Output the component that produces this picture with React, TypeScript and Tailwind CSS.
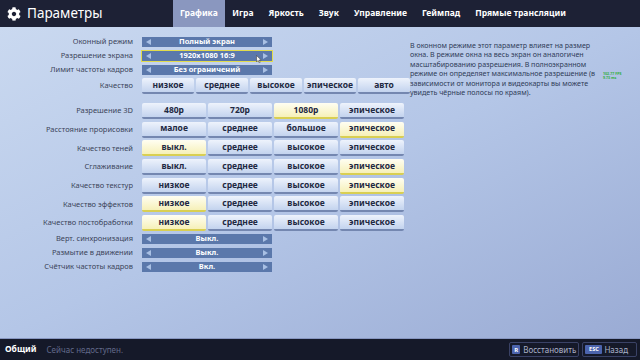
import { FaCog } from 'react-icons/fa';

const tabs = ['Графика', 'Игра', 'Яркость', 'Звук', 'Управление', 'Геймпад', 'Прямые трансляции'];

interface Row {
  label: string;
  options: string[];
  selected: number;
}

const gridRows: Row[] = [
  { label: 'Разрешение 3D', options: ['480p', '720p', '1080p', 'эпическое'], selected: 2 },
  { label: 'Расстояние прорисовки', options: ['малое', 'среднее', 'большое', 'эпическое'], selected: 3 },
  { label: 'Качество теней', options: ['выкл.', 'среднее', 'высокое', 'эпическое'], selected: 0 },
  { label: 'Сглаживание', options: ['выкл.', 'среднее', 'высокое', 'эпическое'], selected: 3 },
  { label: 'Качество текстур', options: ['низкое', 'среднее', 'высокое', 'эпическое'], selected: 3 },
  { label: 'Качество эффектов', options: ['низкое', 'среднее', 'высокое', 'эпическое'], selected: 0 },
  { label: 'Качество постобработки', options: ['низкое', 'среднее', 'высокое', 'эпическое'], selected: 0 },
];

function Label({ text }: { text: string }) {
  return (
    <div className="w-[134px] shrink-0 text-right text-[7.5px] leading-none text-[#3b4459] pr-[1px]">{text}</div>
  );
}

function Selector({ value, focused }: { value: string; focused?: boolean }) {
  return (
    <div
      className={`relative ml-[8px] flex h-[10px] w-[130px] items-center justify-between bg-[#5b78ab] px-[4px] ${
        focused ? 'outline outline-[1.5px] outline-[#e2dc4c]' : ''
      }`}
    >
      <span className="h-0 w-0 border-y-[3.5px] border-r-[5px] border-y-transparent border-r-[#a9c0e4]" />
      <span className="text-[7.5px] font-bold leading-none text-white">{value}</span>
      <span className="h-0 w-0 border-y-[3.5px] border-l-[5px] border-y-transparent border-l-[#a9c0e4]" />
      {focused && (
        <svg className="absolute left-[114px] top-[4px]" width="6" height="8" viewBox="0 0 6 8">
          <path d="M0.5 0.5 L0.5 7 L2 5.5 L3.2 7.8 L4.2 7.3 L3.1 5.1 L5.2 5 Z" fill="#f4f4f4" stroke="#333" strokeWidth="0.5" />
        </svg>
      )}
    </div>
  );
}

function Option({ text, selected, wide }: { text: string; selected?: boolean; wide?: boolean }) {
  return (
    <div
      className={`flex h-[16px] items-center justify-center rounded-[2px] border-b-[2px] text-[8.5px] font-bold leading-none text-[#1e2942] ${
        wide ? 'w-[64px]' : 'w-[52px]'
      } ${
        selected
          ? 'border-[#d9cf52] bg-linear-to-b from-[#fffef2] to-[#f6f0b8]'
          : 'border-[#7487b0] bg-linear-to-b from-[#eef3fc] to-[#c3d3ee]'
      }`}
    >
      {text}
    </div>
  );
}

export default function App() {
  return (
    <div className="flex h-[360px] w-[640px] flex-col overflow-hidden" style={{ fontFamily: '"Noto Sans", "Open Sans", sans-serif' }}>
      {/* header */}
      <div className="flex h-[27px] shrink-0 items-stretch bg-[#1d2135]">
        <div className="flex w-[173px] items-center gap-[6px] pl-[7px]">
          <FaCog className="h-[14px] w-[14px] text-white" />
          <span className="text-[13.5px] leading-none text-white">Параметры</span>
        </div>
        <div className="flex items-stretch">
          {tabs.map((t, i) => (
            <div
              key={t}
              className={`flex items-center text-[8.5px] font-bold text-white ${
                i === 0 ? 'bg-[#8a97bf] px-[7px]' : 'px-[7.5px]'
              }`}
            >
              {t}
            </div>
          ))}
        </div>
      </div>

      {/* body */}
      <div className="flex flex-1 bg-linear-to-br from-[#cad9f0] via-[#b4c6e7] to-[#9aabd4]">
        <div className="flex w-[410px] shrink-0 flex-col pt-[10px]">
          <div className="flex flex-col gap-[4px]">
            <div className="flex items-center"><Label text="Оконный режим" /><Selector value="Полный экран" /></div>
            <div className="flex items-center"><Label text="Разрешение экрана" /><Selector value="1920x1080 16:9" focused /></div>
            <div className="flex items-center"><Label text="Лимит частоты кадров" /><Selector value="Без ограничений" /></div>
          </div>

          <div className="mt-[3px] flex items-center">
            <Label text="Качество" />
            <div className="ml-[8px] flex gap-[2px]">
              {['низкое', 'среднее', 'высокое', 'эпическое', 'авто'].map((o) => (
                <Option key={o} text={o} />
              ))}
            </div>
          </div>

          <div className="mt-[9px] flex flex-col gap-[2.7px]">
            {gridRows.map((r) => (
              <div key={r.label} className="flex items-center">
                <Label text={r.label} />
                <div className="ml-[8px] flex gap-[2px]">
                  {r.options.map((o, i) => (
                    <Option key={i} text={o} wide selected={i === r.selected} />
                  ))}
                </div>
              </div>
            ))}
          </div>

          <div className="mt-[3px] flex flex-col gap-[4px]">
            <div className="flex items-center"><Label text="Верт. синхронизация" /><Selector value="Выкл." /></div>
            <div className="flex items-center"><Label text="Размытие в движении" /><Selector value="Выкл." /></div>
            <div className="flex items-center"><Label text="Счётчик частоты кадров" /><Selector value="Вкл." /></div>
          </div>
        </div>

        <div className="flex items-start pt-[14px]">
          <p className="w-[190px] whitespace-nowrap text-[7.1px] leading-[9.4px] text-[#2f3b57]">
            В оконном режиме этот параметр влияет на размер
            <br />
            окна. В режиме окна на весь экран он аналогичен
            <br />
            масштабированию разрешения. В полноэкранном
            <br />
            режиме он определяет максимальное разрешение (в
            <br />
            зависимости от монитора и видеокарты вы можете
            <br />
            увидеть чёрные полосы по краям).
          </p>
          <div className="ml-[3px] mt-[31px] flex flex-col text-[3.6px] font-bold leading-[4px] text-[#2fae3a]">
            <span>102.77 FPS</span>
            <span>9.73 ms</span>
          </div>
        </div>
      </div>

      {/* footer */}
      <div className="flex h-[22px] shrink-0 items-center border-t border-[#8796c0] bg-[#151929] pl-[5px] pr-[3px]">
        <span className="text-[8.5px] font-bold text-white">Общий</span>
        <span className="ml-[10px] text-[8px] text-[#62698a]">Сейчас недоступен.</span>
        <div className="ml-auto flex gap-[3px]">
          <div className="flex h-[15px] items-center gap-[3px] rounded-[2px] border border-[#3a4266] px-[2px]">
            <span className="flex h-[9px] w-[8px] items-center justify-center rounded-[1px] bg-[#4c64ad] text-[6px] font-bold leading-none text-white">R</span>
            <span className="text-[8px] leading-none text-[#aab1c8]">Восстановить</span>
          </div>
          <div className="flex h-[15px] items-center gap-[2px] rounded-[2px] border border-[#3a4266] px-[2px] pr-[8px]">
            <span className="flex h-[9px] w-[17px] items-center justify-center rounded-[1px] bg-[#4c64ad] text-[5.5px] font-bold leading-none text-white">ESC</span>
            <span className="text-[8px] leading-none text-[#aab1c8]">Назад</span>
          </div>
        </div>
      </div>
    </div>
  );
}
